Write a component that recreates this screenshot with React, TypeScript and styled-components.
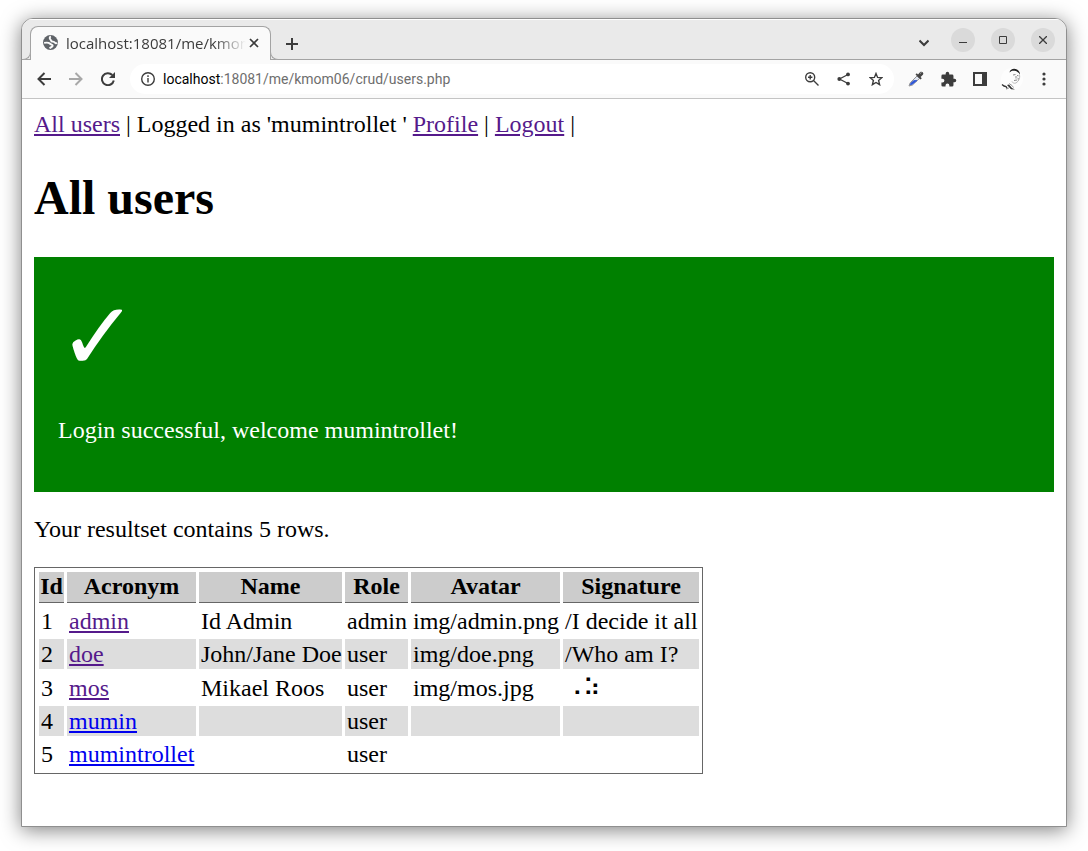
import React from 'react';
import styled, { createGlobalStyle } from 'styled-components';

const Global = createGlobalStyle`
  *, *::before, *::after { box-sizing: border-box; }
  html, body { margin: 0; background: #fff; }
  body { min-height: 100vh; }
`;

const Desktop = styled.div`
  min-height: 100vh;
  display: flex;
  padding: 18px 21px 24px;
`;

const Window = styled.div`
  flex: 1;
  min-width: 0;
  display: flex;
  flex-direction: column;
  overflow: hidden;
  background: #fff;
  border: 1px solid #8f8f8f;
  border-radius: 12px 12px 0 0;
  box-shadow: 0 3px 20px rgba(0, 0, 0, 0.5);
  font-family: "Open Sans", "Noto Sans", sans-serif;
`;

const TabStrip = styled.header`
  display: flex;
  align-items: flex-end;
  height: 41px;
  padding-right: 11px;
  background: #eaeaea;
  box-shadow: inset 0 -1px #a3a3a3, inset 0 1px #fff;
`;

const Tab = styled.div`
  position: relative;
  display: flex;
  align-items: center;
  width: 241px;
  height: 34px;
  margin-left: 8px;
  padding: 0 8px 2px 11px;
  background: #fafafa;
  border: 1px solid #a3a3a3;
  border-bottom: 0;
  border-radius: 8px 8px 0 0;

  &::before, &::after {
    content: "";
    position: absolute;
    bottom: 0;
    width: 9px;
    height: 9px;
    border: 1px solid #a3a3a3;
    border-top: 0;
    background: #eaeaea;
  }
  &::before { left: -9px; border-left: 0; border-radius: 0 0 8px 0; }
  &::after { right: -9px; border-right: 0; border-radius: 0 0 0 8px; }
`;

const TabTitle = styled.span`
  flex: 1;
  margin-left: 7px;
  overflow: hidden;
  white-space: nowrap;
  font-size: 15px;
  line-height: 20px;
  color: #3c3c3c;
  mask-image: linear-gradient(to right, #000 calc(100% - 32px), transparent);
`;

const IconButton = styled.button<{ $w?: number; $h?: number }>`
  display: flex;
  flex: none;
  align-items: center;
  justify-content: center;
  width: ${p => p.$w ?? 32}px;
  height: ${p => p.$h ?? 32}px;
  padding: 0;
  border: 0;
  background: none;
  color: #3c3c3c;
  &:disabled { color: #a8a8a8; }
`;

const WindowControls = styled.div`
  display: flex;
  align-items: center;
  gap: 16px;
  height: 41px;
  margin-left: auto;
`;

const RoundButton = styled(IconButton)`
  width: 24px;
  height: 24px;
  border-radius: 50%;
  background: #dadada;
`;

const Toolbar = styled.div`
  display: flex;
  align-items: center;
  height: 39px;
  padding: 0 6px;
  background: #fafafa;
  border-bottom: 1px solid #c4c4c4;
`;

const AddressBar = styled.div`
  flex: 1;
  min-width: 0;
  display: flex;
  align-items: center;
  height: 30px;
  margin: 0 6px;
  padding: 0 2px 0 3px;
  border-radius: 15px;
  background: #fff;
`;

const Address = styled.div`
  flex: 1;
  overflow: hidden;
  white-space: nowrap;
  font-family: Roboto, "Open Sans", sans-serif;
  font-size: 14px;
  line-height: 20px;
  color: #6e6e6e;
`;

const Host = styled.span`
  color: #000;
`;

const Page = styled.main`
  padding: 11px 12px 52px;
  font-family: "Liberation Serif", "Times New Roman", serif;
  font-size: 24px;
  line-height: 28px;
  color: #000;
`;

const Link = styled.a<{ $fresh?: boolean }>`
  color: ${p => (p.$fresh ? '#0000ee' : '#551a8b')};
  text-decoration: underline;
`;

const Title = styled.h1`
  margin: 32px 0;
  font-size: 48px;
  line-height: 55px;
`;

const Flash = styled.section`
  min-height: 235px;
  padding: 24px;
  background: #008000;
  color: #fff;
`;

const Check = styled.div`
  height: 112px;
  font-family: "DejaVu Sans", sans-serif;
  font-size: 96px;
  line-height: 112px;
`;

const Text = styled.p`
  margin: 24px 0;
  line-height: 27px;
`;

const Table = styled.table`
  border: 1px solid #666;
  border-spacing: 3px;
  padding: 1px 0 1px 1px;
  white-space: nowrap;
`;

const Col = styled.col<{ $w: number }>`
  width: ${p => p.$w}px;
`;

const Th = styled.th`
  padding: 0 0 2px;
  background: #ccc;
  border-bottom: 1px solid #666;
`;

const Row = styled.tr<{ $tall?: boolean }>`
  height: ${p => (p.$tall ? 31 : 30)}px;
  &:nth-child(even) > td { background: #ddd; }
`;

const Td = styled.td`
  padding: 1px 0 1px 2px;
`;

const columns = [
  { label: 'Id', width: 25 },
  { label: 'Acronym', width: 129 },
  { label: 'Name', width: 143 },
  { label: 'Role', width: 63 },
  { label: 'Avatar', width: 149 },
  { label: 'Signature', width: 136 },
];

const users = [
  { id: 1, acronym: 'admin', name: 'Id Admin', role: 'admin', avatar: 'img/admin.png', signature: '/I decide it all' },
  { id: 2, acronym: 'doe', name: 'John/Jane Doe', role: 'user', avatar: 'img/doe.png', signature: '/Who am I?' },
  { id: 3, acronym: 'mos', name: 'Mikael Roos', role: 'user', avatar: 'img/mos.jpg', signature: '⠠⠵', tall: true },
  { id: 4, acronym: 'mumin', name: '', role: 'user', avatar: '', signature: '', fresh: true },
  { id: 5, acronym: 'mumintrollet', name: '', role: 'user', avatar: '', signature: '', fresh: true },
];

const stroke = { fill: 'none', stroke: 'currentColor', strokeWidth: 2 };

export default function App() {
  return (
    <>
      <Global />
      <Desktop>
        <Window>
          <TabStrip>
            <Tab>
              <svg width="17" height="17" viewBox="0 0 24 24" fill="#5f6368">
                <circle cx="12" cy="12" r="10.5" />
                <path d="M12.500 3.500c-2 1-2 3-.5 4.500 1 1 .5 2 2 2.500s3 0 4 1.500 2.500 1 3 0M3 12.500c3-.5 6-1 8 1s4 1 4 3-3 2-4 4" fill="none" stroke="#fafafa" strokeWidth="2.800" />
              </svg>
              <TabTitle>localhost:18081/me/kmom</TabTitle>
              <IconButton $w={16} $h={16} aria-label="Close tab">
                <svg width="10" height="10" viewBox="0 0 10 10" {...stroke} strokeWidth={1.7}><path d="M1 1l8 8M9 1L1 9" /></svg>
              </IconButton>
            </Tab>
            <IconButton $w={42} $h={33} aria-label="New tab">
              <svg width="12" height="12" viewBox="0 0 12 12" {...stroke}><path d="M6 0v12M0 6h12" /></svg>
            </IconButton>
            <WindowControls>
              <IconButton $w={22} $h={24} aria-label="Search tabs">
                <svg width="10" height="14" viewBox="0 0 10 14" {...stroke}><path d="M.5 7.500L5 12l4.500-4.500" /></svg>
              </IconButton>
              <RoundButton aria-label="Minimize">
                <svg width="8" height="8" viewBox="0 0 8 8"><path d="M0 6h8v1H0z" fill="currentColor" /></svg>
              </RoundButton>
              <RoundButton aria-label="Maximize">
                <svg width="8" height="8" viewBox="0 0 8 8" {...stroke} strokeWidth={1}><path d="M.5.5h7v7h-7z" /></svg>
              </RoundButton>
              <RoundButton aria-label="Close">
                <svg width="8" height="8" viewBox="0 0 8 8" {...stroke} strokeWidth={1.3}><path d="M0 0l8 8M8 0L0 8" /></svg>
              </RoundButton>
            </WindowControls>
          </TabStrip>
          <Toolbar>
            <IconButton aria-label="Back">
              <svg width="14" height="14" viewBox="0 0 14 14" {...stroke}><path d="M14 7H1.500M7.500 1l-6 6 6 6" /></svg>
            </IconButton>
            <IconButton disabled aria-label="Forward">
              <svg width="14" height="14" viewBox="0 0 14 14" {...stroke}><path d="M0 7h12.500M6.500 1l6 6-6 6" /></svg>
            </IconButton>
            <IconButton aria-label="Reload">
              <svg width="14" height="14" viewBox="0 0 14 14" {...stroke}><path d="M12.800 8.500A6 6 0 1 1 11.300 3" /><path d="M14 0v6H8z" fill="currentColor" stroke="none" /></svg>
            </IconButton>
            <AddressBar>
              <IconButton $w={30} $h={30} aria-label="Site information">
                <svg width="14" height="14" viewBox="0 0 14 14" {...stroke} strokeWidth={1.4}><circle cx="7" cy="7" r="6.300" /><path d="M7 6v4.500M7 3.300v1.600" /></svg>
              </IconButton>
              <Address><Host>localhost</Host>:18081/me/kmom06/crud/users.php</Address>
              <IconButton aria-label="Zoom">
                <svg width="14" height="14" viewBox="0 0 14 14" {...stroke} strokeWidth={1.4}><circle cx="5.200" cy="5.200" r="4.500" /><path d="M8.500 8.500l5 5M5.200 3v4.400M3 5.200h4.400" /></svg>
              </IconButton>
              <IconButton aria-label="Share">
                <svg width="14" height="14" viewBox="0 0 14 14" fill="currentColor"><path d="M11 2.500L2.500 7l8.500 4.500" fill="none" stroke="currentColor" strokeWidth="1.300" /><circle cx="11" cy="2.400" r="1.900" /><circle cx="2.300" cy="7" r="1.900" /><circle cx="11" cy="11.600" r="1.900" /></svg>
              </IconButton>
              <IconButton aria-label="Bookmark">
                <svg width="14" height="14" viewBox="0 0 14 14" {...stroke} strokeWidth={1.4}><path d="M7 1.500l1.600 3.900 4.200.3-3.200 2.800 1 4.200L7 10.500l-3.600 2.200 1-4.200L1.200 5.700l4.200-.3z" /></svg>
              </IconButton>
            </AddressBar>
            <IconButton aria-label="Color picker">
              <svg width="16" height="16" viewBox="0 0 16 16">
                <path d="M1 15l1.200-3.200L9 5l2.500 2.500L4.500 14z" fill="#dfe5f2" stroke="#8a8a8a" strokeWidth=".9" />
                <path d="M2.200 13.800l1-2L6 9.500h3L4.300 13.200z" fill="#2f55d4" stroke="#2f55d4" strokeWidth=".8" />
                <path d="M7.500 3.500l5 5 1.300-1.300-1.200-1.200 2.300-2.200C16.300 2 14 -.3 12.200 1.100L10 3.400 8.800 2.200z" fill="#444" />
                <path d="M12 2.500l1.500-1" stroke="#aaa" />
              </svg>
            </IconButton>
            <IconButton aria-label="Extensions">
              <svg width="17" height="17" viewBox="0 0 24 24" fill="currentColor"><path d="M20.500 11H19V7a2 2 0 0 0-2-2h-4V3.500a2.500 2.500 0 0 0-5 0V5H4a2 2 0 0 0-2 2v3.800h1.500a2.700 2.700 0 0 1 0 5.400H2V20a2 2 0 0 0 2 2h3.800v-1.500a2.700 2.700 0 0 1 5.400 0V22H17a2 2 0 0 0 2-2v-4h1.500a2.500 2.500 0 0 0 0-5z" /></svg>
            </IconButton>
            <IconButton aria-label="Side panel">
              <svg width="14" height="14" viewBox="0 0 14 14" fill="currentColor"><path fillRule="evenodd" d="M0 0h14v14H0zM2 2v10h7V2z" /></svg>
            </IconButton>
            <IconButton aria-label="Profile">
              <svg width="22" height="22" viewBox="0 0 22 22" fill="none">
                <circle cx="11" cy="11" r="11" fill="#fdfdfd" />
                <path d="M8.500 4.500C9 1 13 0 16 1.500c2 1 3 3 3 5l-1.200-1.500C16 3 13 2.500 10.500 3z" fill="#222" />
                <path d="M18.500 6.500c.8 3.500-.5 6.500-3.500 8.500-2 .7-3.500-.3-4-1.500" stroke="#bbb" />
                <path d="M12 7l2.500-.5M16 7.500l1.500.3M15 8v2.500M13 12.500l3-.5" stroke="#888" />
                <path d="M16.500 9.500l1.500 1-1 2.500z" fill="#999" />
                <path d="M1 16.500l2 1.500 2 .5 1.500 2.500" stroke="#333" strokeWidth="1.400" />
                <path d="M6 17l2-.5 3 3.500 3 1.500-4-.2z" fill="#333" />
                <path d="M8 15.500l3 2 1.500 2M5 21l3-1" stroke="#999" />
              </svg>
            </IconButton>
            <IconButton aria-label="Menu">
              <svg width="4" height="14" viewBox="0 0 4 14" fill="currentColor"><circle cx="2" cy="2" r="1.600" /><circle cx="2" cy="7" r="1.600" /><circle cx="2" cy="12" r="1.600" /></svg>
            </IconButton>
          </Toolbar>
          <Page>
            <nav>
              <Link href="#users">All users</Link> | Logged in as 'mumintrollet '{' '}
              <Link href="#profile">Profile</Link> | <Link href="#logout">Logout</Link> |
            </nav>
            <Title>All users</Title>
            <Flash>
              <Check>✓</Check>
              <Text>Login successful, welcome mumintrollet!</Text>
            </Flash>
            <Text>Your resultset contains 5 rows.</Text>
            <Table>
              <colgroup>
                {columns.map(c => <Col key={c.label} $w={c.width} />)}
              </colgroup>
              <thead>
                <tr>
                  {columns.map(c => <Th key={c.label} scope="col">{c.label}</Th>)}
                </tr>
              </thead>
              <tbody>
                {users.map(u => (
                  <Row key={u.id} $tall={u.tall}>
                    <Td>{u.id}</Td>
                    <Td><Link href={`#${u.acronym}`} $fresh={u.fresh}>{u.acronym}</Link></Td>
                    <Td>{u.name}</Td>
                    <Td>{u.role}</Td>
                    <Td>{u.avatar}</Td>
                    <Td>{u.signature}</Td>
                  </Row>
                ))}
              </tbody>
            </Table>
          </Page>
        </Window>
      </Desktop>
    </>
  );
}
